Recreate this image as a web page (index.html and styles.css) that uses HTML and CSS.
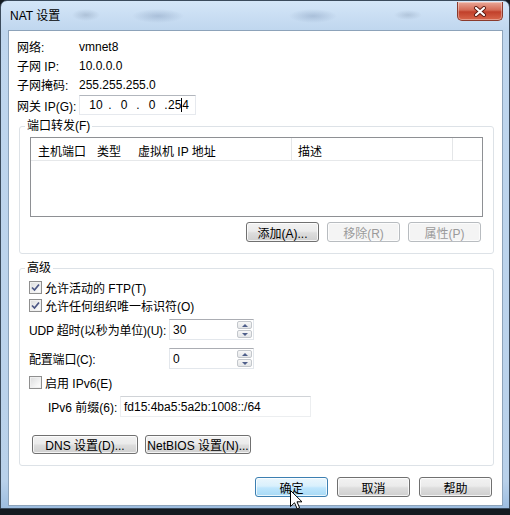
FILE: index.html
```html
<!DOCTYPE html>
<html lang="zh-CN">
<head>
  <meta charset="UTF-8">
  <title>NAT 设置</title>
  <link rel="stylesheet" href="styles.css">
</head>
<body>

<div class="window">
  <div class="titlebar">
    <span class="title">NAT 设置</span>
    <span class="close">
      <svg width="14" height="11" viewBox="0 0 14 11">
        <path d="M3 2 L11 9 M11 2 L3 9" stroke="#5a1a12" stroke-width="4" stroke-linecap="round"/>
        <path d="M3 2 L11 9 M11 2 L3 9" stroke="#fff" stroke-width="2.2" stroke-linecap="round"/>
      </svg>
    </span>
  </div>

  <div class="client">
    <div class="row"><span class="lbl">网络:</span><span>vmnet8</span></div>
    <div class="row"><span class="lbl">子网 IP:</span><span>10.0.0.0</span></div>
    <div class="row"><span class="lbl">子网掩码:</span><span>255.255.255.0</span></div>
    <div class="row gw">
      <span class="lbl">网关 IP(G):</span>
      <span class="ipbox">
        <span class="oct">10</span><span class="dot">.</span><span class="oct">0</span><span class="dot">.</span><span class="oct">0</span><span class="dot">.</span><span>25<span class="caret"></span>4</span>
      </span>
    </div>

    <fieldset class="group ports">
      <legend>端口转发(F)</legend>
      <div class="list">
        <div class="list-head">
          <span class="col c1">主机端口</span>
          <span class="col c2">类型</span>
          <span class="col c3">虚拟机 IP 地址</span>
          <span class="col c4">描述</span>
          <span class="col c5"></span>
        </div>
      </div>
      <div class="btn-row">
        <button class="btn">添加(A)...</button>
        <button class="btn disabled">移除(R)</button>
        <button class="btn disabled">属性(P)</button>
      </div>
    </fieldset>

    <fieldset class="group adv">
      <legend>高级</legend>
      <div class="check">
        <span class="cb"><svg width="11" height="11" viewBox="0 0 11 11"><path d="M2 5.5 L4.5 8 L9 2.5" fill="none" stroke="#4b5685" stroke-width="1.7"/></svg></span>
        允许活动的 FTP(T)
      </div>
      <div class="check">
        <span class="cb"><svg width="11" height="11" viewBox="0 0 11 11"><path d="M2 5.5 L4.5 8 L9 2.5" fill="none" stroke="#4b5685" stroke-width="1.7"/></svg></span>
        允许任何组织唯一标识符(O)
      </div>
      <div class="field udp">
        <span class="flbl">UDP 超时(以秒为单位)(U):</span>
        <span class="input num">30
          <span class="spin"><span class="up"></span><span class="down"></span></span>
        </span>
      </div>
      <div class="field port">
        <span class="flbl">配置端口(C):</span>
        <span class="input num">0
          <span class="spin"><span class="up"></span><span class="down"></span></span>
        </span>
      </div>
      <div class="check v6">
        <span class="cb"></span>
        启用 IPv6(E)
      </div>
      <div class="field prefix">
        <span class="plbl">IPv6 前缀(6):</span>
        <span class="input wide">fd15:4ba5:5a2b:1008::/64</span>
      </div>
      <div class="btn-row left">
        <button class="btn big">DNS 设置(D)...</button>
        <button class="btn big">NetBIOS 设置(N)...</button>
      </div>
    </fieldset>

    <div class="btn-row bottom">
      <button class="btn focus">确定</button>
      <button class="btn">取消</button>
      <button class="btn">帮助</button>
    </div>
  </div>

  <svg class="cursor" width="13" height="20" viewBox="0 0 13 20">
    <path d="M0.5 0.5 L0.5 16.5 L4.5 12.8 L7.2 18.8 L9.6 17.8 L7 11.8 L12 11.8 Z" fill="#fff" stroke="#000" stroke-width="1"/>
  </svg>
</div>

</body>
</html>
```

FILE: styles.css
```css
* {
  box-sizing: border-box;
}

body {
  margin: 0;
  width: 510px;
  height: 515px;
  overflow: hidden;
  background-color: #141a20;
  font-family: "Liberation Sans", "Noto Sans CJK SC", sans-serif;
  font-size: 12px;
  color: #000;
}

.window {
  position: relative;
  width: 510px;
  height: 509px;
  border: 1px solid #3b4b5c;
  border-radius: 7px 7px 0 0;
  padding: 0 6px 2px 7px;
  background: linear-gradient(#d4e6f8, #bfd6ee 30px, #b9d1ea 480px, #9dbde0);
}

.titlebar {
  height: 29px;
  display: flex;
  justify-content: space-between;
  align-items: flex-start;
  background:
    radial-gradient(ellipse 14px 6px at 78px 14px, rgba(120,140,165,.35), transparent),
    radial-gradient(ellipse 26px 7px at 150px 15px, rgba(110,135,170,.35), transparent),
    radial-gradient(ellipse 24px 7px at 305px 15px, rgba(110,135,170,.35), transparent),
    radial-gradient(ellipse 14px 5px at 400px 14px, rgba(120,140,165,.3), transparent);
}

.title {
  padding-left: 2px;
  line-height: 31px;
}

.close {
  width: 46px;
  height: 19px;
  margin-top: 1px;
  border: 1px solid #8a3a2c;
  border-top: none;
  border-radius: 0 0 5px 5px;
  background: linear-gradient(#e9a898, #d46a55 45%, #c1402b 55%, #d8674c);
  box-shadow: inset 0 0 0 1px rgba(255,255,255,.35);
  display: flex;
  align-items: center;
  justify-content: center;
}

.client {
  height: 476px;
  background-color: #fff;
  border: 1px solid #8da3ba;
  padding: 6px 8px 0 8px;
}

.row {
  display: flex;
  align-items: center;
  height: 19px;
}

.lbl {
  width: 62px;
  flex: none;
  white-space: nowrap;
}

.row.gw {
  height: 20px;
  margin-top: 1px;
}

.ipbox {
  display: flex;
  align-items: center;
  width: 117px;
  height: 20px;
  padding-left: 4px;
  border: 1px solid #e6e9ee;
  border-top-color: #b2b6bd;
}

.oct {
  width: 24px;
  text-align: center;
}

.dot {
  width: 4px;
  text-align: center;
}

.caret {
  display: inline-block;
  width: 1px;
  height: 14px;
  margin: 0 0 -3px;
  background-color: #000;
}

.group {
  margin: 3px 0 0 2px;
  border: 1px solid #dde2e7;
  border-radius: 3px;
  min-width: 0;
}

.group legend {
  padding: 0 2px;
  line-height: 16px;
}

.ports {
  padding: 3px 10px 11px 10px;
}

.ports legend {
  margin-left: -5px;
}

.list {
  height: 80px;
  border: 1px solid #8e9094;
}

.list-head {
  display: flex;
  height: 23px;
  border-bottom: 1px solid #e6e8ea;
}

.col {
  display: flex;
  align-items: center;
  padding: 3px 0 0 7px;
}

.c1 { width: 60px; }
.c2 { width: 40px; padding-left: 6px; }
.c3 { width: 161px; border-right: 1px solid #e4e6e8; }
.c4 { width: 161px; padding-left: 6px; border-right: 1px solid #e4e6e8; }
.c5 { flex: 1; }

.btn-row {
  display: flex;
  justify-content: flex-end;
  gap: 8px;
  margin-top: 5px;
  padding-right: 2px;
}

.btn {
  width: 73px;
  height: 20px;
  padding: 0;
  font-family: inherit;
  font-size: 12px;
  color: #000;
  border: 1px solid #707070;
  border-radius: 3px;
  background: linear-gradient(#f2f2f2, #ebebeb 45%, #dddddd 55%, #cfcfcf);
  box-shadow: inset 0 0 0 1px rgba(255,255,255,.75);
}

.btn.disabled {
  color: #9a9a9a;
  border-color: #b8bcc0;
  background: #f4f4f4;
}

.btn.focus {
  border-color: #3c7fb1;
  background: linear-gradient(#eaf6fd, #d9f0fc 45%, #bee6fd 55%, #a7d9f5);
}

.adv {
  margin-top: 6px;
  padding: 2px 10px 11px 9px;
}

.adv legend {
  margin-left: -4px;
}

.check {
  display: flex;
  align-items: center;
  gap: 3px;
  height: 18px;
}

.cb {
  width: 13px;
  height: 13px;
  border: 1px solid #8f8f8f;
  background: linear-gradient(135deg, #dadbdc, #f6f6f6 70%, #fff);
  box-shadow: inset 0 0 0 1px #f0f0f0;
  display: flex;
  align-items: center;
  justify-content: center;
}

.field {
  display: flex;
  align-items: center;
  height: 21px;
}

.flbl {
  width: 140px;
  flex: none;
  white-space: nowrap;
  letter-spacing: -0.2px;
}

.udp {
  margin-top: 5px;
}

.port {
  margin-top: 8px;
}

.check.v6 {
  margin-top: 4px;
}

.prefix {
  margin-top: 5px;
}

.plbl {
  width: 91px;
  flex: none;
  white-space: nowrap;
  padding-left: 19px;
}

.input {
  display: flex;
  align-items: center;
  height: 21px;
  padding-left: 3px;
  border: 1px solid #e3e7ec;
  border-top-color: #abadb3;
}

.input.num {
  width: 85px;
}

.input.wide {
  width: 191px;
  border-color: #eceef0;
  border-top-color: #d0d3d7;
}

.spin {
  display: flex;
  flex-direction: column;
  gap: 1px;
  margin-left: auto;
  margin-right: 1px;
}

.spin span {
  width: 15px;
  height: 8px;
  border: 1px solid #c3c7cc;
  border-radius: 2px;
  background: linear-gradient(#f7f7f7, #e4e6e8);
  display: flex;
  align-items: center;
  justify-content: center;
}

.spin .up::after {
  content: "";
  border: 3px solid transparent;
  border-bottom: 3px solid #4f5f8a;
  border-top: none;
}

.spin .down::after {
  content: "";
  border: 3px solid transparent;
  border-top: 3px solid #4f5f8a;
  border-bottom: none;
}

.btn-row.left {
  justify-content: flex-start;
  gap: 7px;
  margin-top: 18px;
  padding-left: 3px;
}

.btn.big {
  width: 106px;
  height: 19px;
}

.btn-row.bottom {
  margin-top: 11px;
  gap: 9px;
  padding-right: 2px;
}

.cursor {
  position: absolute;
  left: 289px;
  top: 489px;
}
```
